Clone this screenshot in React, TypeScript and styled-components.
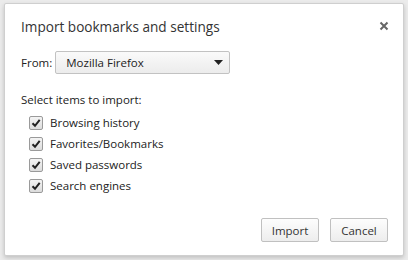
import styled, { createGlobalStyle } from "styled-components";

const Global = createGlobalStyle`
  html, body {
    margin: 0;
    padding: 0;
    background: #ebebeb;
    overflow: hidden;
  }
  body {
    font-family: "Open Sans", "Noto Sans", "Liberation Sans", sans-serif;
    color: #222;
  }
`;

const Page = styled.div`
  width: 408px;
  height: 260px;
  padding: 3px 4px 4px 4px;
  box-sizing: border-box;
`;

const Dialog = styled.div`
  width: 400px;
  height: 253px;
  box-sizing: border-box;
  background: #fff;
  border: 1px solid #cfcfcf;
  border-radius: 2px;
  box-shadow: 0 2px 4px rgba(0, 0, 0, 0.18);
  display: flex;
  flex-direction: column;
  padding: 0 15px 13px 16px;
`;

const Header = styled.div`
  display: flex;
  align-items: center;
  justify-content: space-between;
  height: 44px;
`;

const Title = styled.div`
  font-size: 13.6px;
  color: #333;
`;

const Close = styled.div`
  width: 12px;
  height: 12px;
  margin-right: -2px;
  display: flex;
  align-items: center;
  justify-content: center;
`;

const FromRow = styled.div`
  display: flex;
  align-items: center;
  gap: 3px;
  margin-top: 3px;
  font-size: 11.5px;
`;

const Select = styled.div`
  width: 175px;
  height: 23px;
  box-sizing: border-box;
  border: 1px solid #c2c2c2;
  border-radius: 2px;
  background: linear-gradient(#fafafa, #ececec);
  display: flex;
  align-items: center;
  justify-content: space-between;
  padding: 0 6px 0 10px;
  font-size: 11.5px;
  color: #222;
`;

const Section = styled.div`
  margin-top: 18px;
  font-size: 11.5px;
`;

const List = styled.div`
  display: flex;
  flex-direction: column;
  gap: 4px;
  margin-top: 7px;
  padding-left: 8px;
`;

const Item = styled.label`
  display: flex;
  align-items: center;
  gap: 7px;
  height: 17px;
  font-size: 11.5px;
`;

const Box = styled.span`
  width: 12px;
  height: 12px;
  border: 1px solid #9a9a9a;
  border-radius: 2px;
  background: linear-gradient(#f4f4f4, #dcdcdc);
  display: flex;
  align-items: center;
  justify-content: center;
`;

const Footer = styled.div`
  margin-top: auto;
  display: flex;
  justify-content: flex-end;
  gap: 11px;
`;

const Button = styled.button`
  width: 58px;
  height: 24px;
  border: 1px solid #c0c0c0;
  border-radius: 2px;
  background: linear-gradient(#fdfdfd, #ededed);
  font-family: inherit;
  font-size: 11.5px;
  color: #333;
  padding: 0;
`;

const items = [
  "Browsing history",
  "Favorites/Bookmarks",
  "Saved passwords",
  "Search engines",
];

function Check() {
  return (
    <svg width="10" height="10" viewBox="0 0 10 10">
      <path d="M1.5 5.2 L4 7.8 L8.7 1.8" fill="none" stroke="#222" strokeWidth="2" />
    </svg>
  );
}

export default function App() {
  return (
    <>
      <Global />
      <Page>
        <Dialog>
          <Header>
            <Title>Import bookmarks and settings</Title>
            <Close>
              <svg width="10" height="10" viewBox="0 0 10 10">
                <path d="M1.5 1.5 L8.5 8.5 M8.5 1.5 L1.5 8.5" stroke="#666" strokeWidth="2" />
              </svg>
            </Close>
          </Header>
          <FromRow>
            <span>From:</span>
            <Select>
              <span>Mozilla Firefox</span>
              <svg width="9" height="5" viewBox="0 0 9 5">
                <path d="M0 0 H9 L4.5 5 Z" fill="#222" />
              </svg>
            </Select>
          </FromRow>
          <Section>
            Select items to import:
            <List>
              {items.map((t) => (
                <Item key={t}>
                  <Box>
                    <Check />
                  </Box>
                  {t}
                </Item>
              ))}
            </List>
          </Section>
          <Footer>
            <Button>Import</Button>
            <Button>Cancel</Button>
          </Footer>
        </Dialog>
      </Page>
    </>
  );
}
